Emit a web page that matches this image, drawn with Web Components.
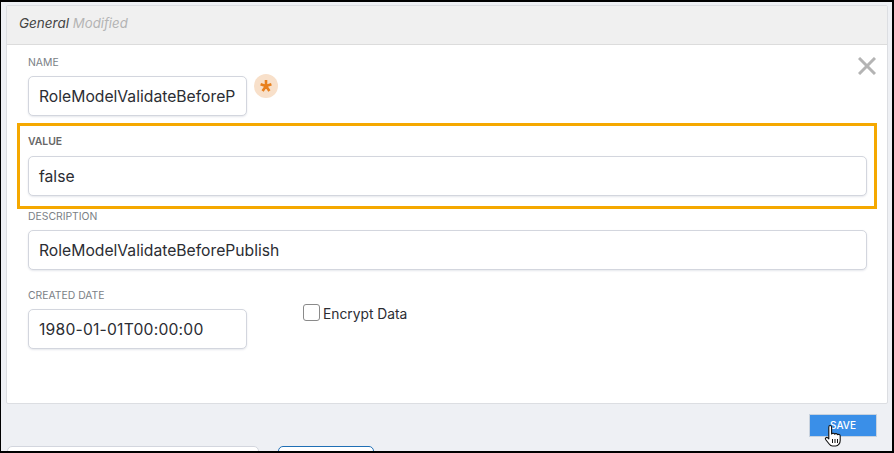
<!DOCTYPE html>
<html>
<head>
<meta charset="utf-8">
<title>General</title>
<style>
  html, body { margin: 0; padding: 0; }
  body { width: 894px; height: 453px; overflow: hidden; font-family: "Inter", "Liberation Sans", sans-serif; }
</style>
</head>
<body>
<settings-page>
  <form-panel title-text="General" status="Modified">
    <close-icon slot="close"></close-icon>
    <div style="display:flex;align-items:flex-start;gap:7px">
      <form-field label="Name" value="RoleModelValidateBeforeP" width="219"></form-field>
      <required-mark></required-mark>
    </div>
    <form-field label="Value" value="false" highlighted></form-field>
    <form-field label="Description" value="RoleModelValidateBeforePublish"></form-field>
    <div style="display:flex;align-items:flex-start;gap:56px">
      <form-field label="Created Date" value="1980-01-01T00:00:00" width="219" style="letter-spacing:.2px"></form-field>
      <check-box label="Encrypt Data"></check-box>
    </div>
  </form-panel>
  <action-bar>
    <save-button>Save</save-button>
  </action-bar>
  <cut-off-row></cut-off-row>
</settings-page>

<script>
class SettingsPage extends HTMLElement {
  constructor() {
    super();
    this.attachShadow({ mode: 'open' });
    this.shadowRoot.innerHTML = `
      <style>
        :host {
          display: block;
          box-sizing: border-box;
          width: 894px;
          height: 453px;
          overflow: hidden;
          background: #eef0f4;
          border: 2px solid #000;
          border-left-width: 1px;
          padding: 3px 4px 0 5px;
        }
      </style>
      <slot></slot>
    `;
  }
}

class FormPanel extends HTMLElement {
  constructor() {
    super();
    this.attachShadow({ mode: 'open' });
    const title = this.getAttribute('title-text');
    const status = this.getAttribute('status');
    this.shadowRoot.innerHTML = `
      <style>
        :host {
          display: block;
          box-sizing: border-box;
          height: 399px;
          background: #fff;
          border: 1px solid #dcdee2;
          border-radius: 2px;
          position: relative;
        }
        header {
          box-sizing: border-box;
          height: 39px;
          background: #f0f0f0;
          border-bottom: 1px solid #dcdcdc;
          padding: 9px 0 0 12px;
          font-size: 13.5px;
          line-height: 16px;
          font-style: italic;
          color: #444;
        }
        header span { color: #b4b4b4; font-size: 13.2px; }
        .body {
          display: flex;
          flex-direction: column;
          padding: 10px 0 0 21px;
          width: 839px;
        }
        .close { position: absolute; top: 51px; right: 11px; }
      </style>
      <header>${title} <span>${status}</span></header>
      <div class="close"><slot name="close"></slot></div>
      <div class="body"><slot></slot></div>
    `;
  }
}

class FormField extends HTMLElement {
  constructor() {
    super();
    this.attachShadow({ mode: 'open' });
    const width = this.getAttribute('width');
    this.shadowRoot.innerHTML = `
      <style>
        :host {
          display: block;
          box-sizing: border-box;
          height: 79px;
        }
        :host([highlighted]) {
          height: 86px;
          margin: -11px -10px 0 -11px;
          padding: 8px 7px 0 8px;
          border: 3px solid #f5a800;
        }
        :host([highlighted]) label { height: 22px; color: #666; font-weight: 600; }
        label {
          display: block;
          box-sizing: border-box;
          height: 21px;
          padding-top: 1px;
          font-size: 10.4px;
          line-height: 14px;
          color: #7b7f86;
          text-transform: uppercase;
          letter-spacing: 0;
        }
        .box {
          box-sizing: border-box;
          width: ${width ? width + 'px' : '100%'};
          height: 40px;
          background: #fff;
          border: 1px solid #d3d6de;
          border-radius: 5px;
          box-shadow: 0 1px 2px rgba(110, 120, 150, .18);
          padding: 0 10px;
          font-size: 15.7px;
          line-height: 39px;
          color: #2b2d33;
          white-space: nowrap;
          overflow: hidden;
        }
      </style>
      <label>${this.getAttribute('label')}</label>
      <div class="box">${this.getAttribute('value')}</div>
    `;
  }
}

class RequiredMark extends HTMLElement {
  constructor() {
    super();
    this.attachShadow({ mode: 'open' });
    this.shadowRoot.innerHTML = `
      <style>
        :host {
          display: flex;
          align-items: center;
          justify-content: center;
          width: 24px;
          height: 24px;
          margin-top: 19px;
          border-radius: 50%;
          background: #f8e0ca;
        }
        svg { display: block; }
      </style>
      <svg width="14" height="14" viewBox="0 0 14 14" fill="none" stroke="#e8801e" stroke-width="2.6">
        <path d="M7 1v6M7 7l5.4-1.8M7 7l3.4 5M7 7l-3.4 5M7 7L1.6 5.2"/>
      </svg>
    `;
  }
}

class CloseIcon extends HTMLElement {
  constructor() {
    super();
    this.attachShadow({ mode: 'open' });
    this.shadowRoot.innerHTML = `
      <style>
        :host { display: block; width: 18px; height: 18px; }
        svg { display: block; }
      </style>
      <svg width="18" height="18" viewBox="0 0 18 18" stroke="#b4b4b4" stroke-width="3" fill="none">
        <path d="M1 1l16 16M17 1L1 17"/>
      </svg>
    `;
  }
}

class CheckBox extends HTMLElement {
  constructor() {
    super();
    this.attachShadow({ mode: 'open' });
    this.shadowRoot.innerHTML = `
      <style>
        :host {
          display: flex;
          align-items: flex-start;
          gap: 3px;
          margin-top: 16px;
          font-size: 13.8px;
          line-height: 17px;
          color: #2b2d33;
        }
        i {
          display: block;
          box-sizing: border-box;
          width: 17px;
          height: 17px;
          background: #fff;
          border: 1px solid #8a8a8a;
          border-radius: 3px;
        }
        span { padding-top: 2px; }
      </style>
      <i></i><span>${this.getAttribute('label')}</span>
    `;
  }
}

class ActionBar extends HTMLElement {
  constructor() {
    super();
    this.attachShadow({ mode: 'open' });
    this.shadowRoot.innerHTML = `
      <style>
        :host {
          display: flex;
          justify-content: flex-end;
          align-items: flex-start;
          box-sizing: border-box;
          height: 33px;
          padding: 10px 11px 0 0;
        }
      </style>
      <slot></slot>
    `;
  }
}

class SaveButton extends HTMLElement {
  constructor() {
    super();
    this.attachShadow({ mode: 'open' });
    this.shadowRoot.innerHTML = `
      <style>
        :host {
          display: block;
          position: relative;
          box-sizing: border-box;
          width: 68px;
          height: 23px;
          background: #3a8fe8;
          border: 1px solid #c8d2de;
          color: #fff;
          font-size: 10px;
          font-weight: 500;
          line-height: 21px;
          text-align: center;
          text-transform: uppercase;
        }
        svg { position: absolute; left: 14px; top: 9px; }
      </style>
      <slot></slot>
      <svg width="20" height="24" viewBox="0 0 20 24">
        <path d="M6 1.5c1 0 1.6.7 1.6 1.7V10c.5-1 2.600-1 3 .2.600-.9 2.600-.7 3 .5.800-.6 2.600-.1 2.600 1.300v4.500c0 2.500-1.800 5.500-4.500 5.500H8.500c-1.500 0-2.500-.9-3.300-2L1.600 15.500c-.9-1.300 1-2.800 2.200-1.700l1 1V3.200C4.800 2.200 5.200 1.500 6 1.500z" fill="#fff" stroke="#111" stroke-width="1.100" stroke-linejoin="round"/>
        <path d="M8.500 15v4M11 15v4M13.500 15v4" stroke="#111" stroke-width="1"/>
      </svg>
    `;
  }
}

class CutOffRow extends HTMLElement {
  constructor() {
    super();
    this.attachShadow({ mode: 'open' });
    this.shadowRoot.innerHTML = `
      <style>
        :host {
          display: flex;
          gap: 19px;
          margin-top: 9px;
          padding-left: 1px;
        }
        div {
          box-sizing: border-box;
          height: 30px;
          background: #fff;
          border-radius: 5px;
        }
        .a { width: 252px; border: 1px solid #d3d6de; }
        .b { width: 96px; border: 1px solid #1f6fb5; }
      </style>
      <div class="a"></div><div class="b"></div>
    `;
  }
}

customElements.define('settings-page', SettingsPage);
customElements.define('form-panel', FormPanel);
customElements.define('form-field', FormField);
customElements.define('required-mark', RequiredMark);
customElements.define('close-icon', CloseIcon);
customElements.define('check-box', CheckBox);
customElements.define('action-bar', ActionBar);
customElements.define('save-button', SaveButton);
customElements.define('cut-off-row', CutOffRow);
</script>
</body>
</html>
